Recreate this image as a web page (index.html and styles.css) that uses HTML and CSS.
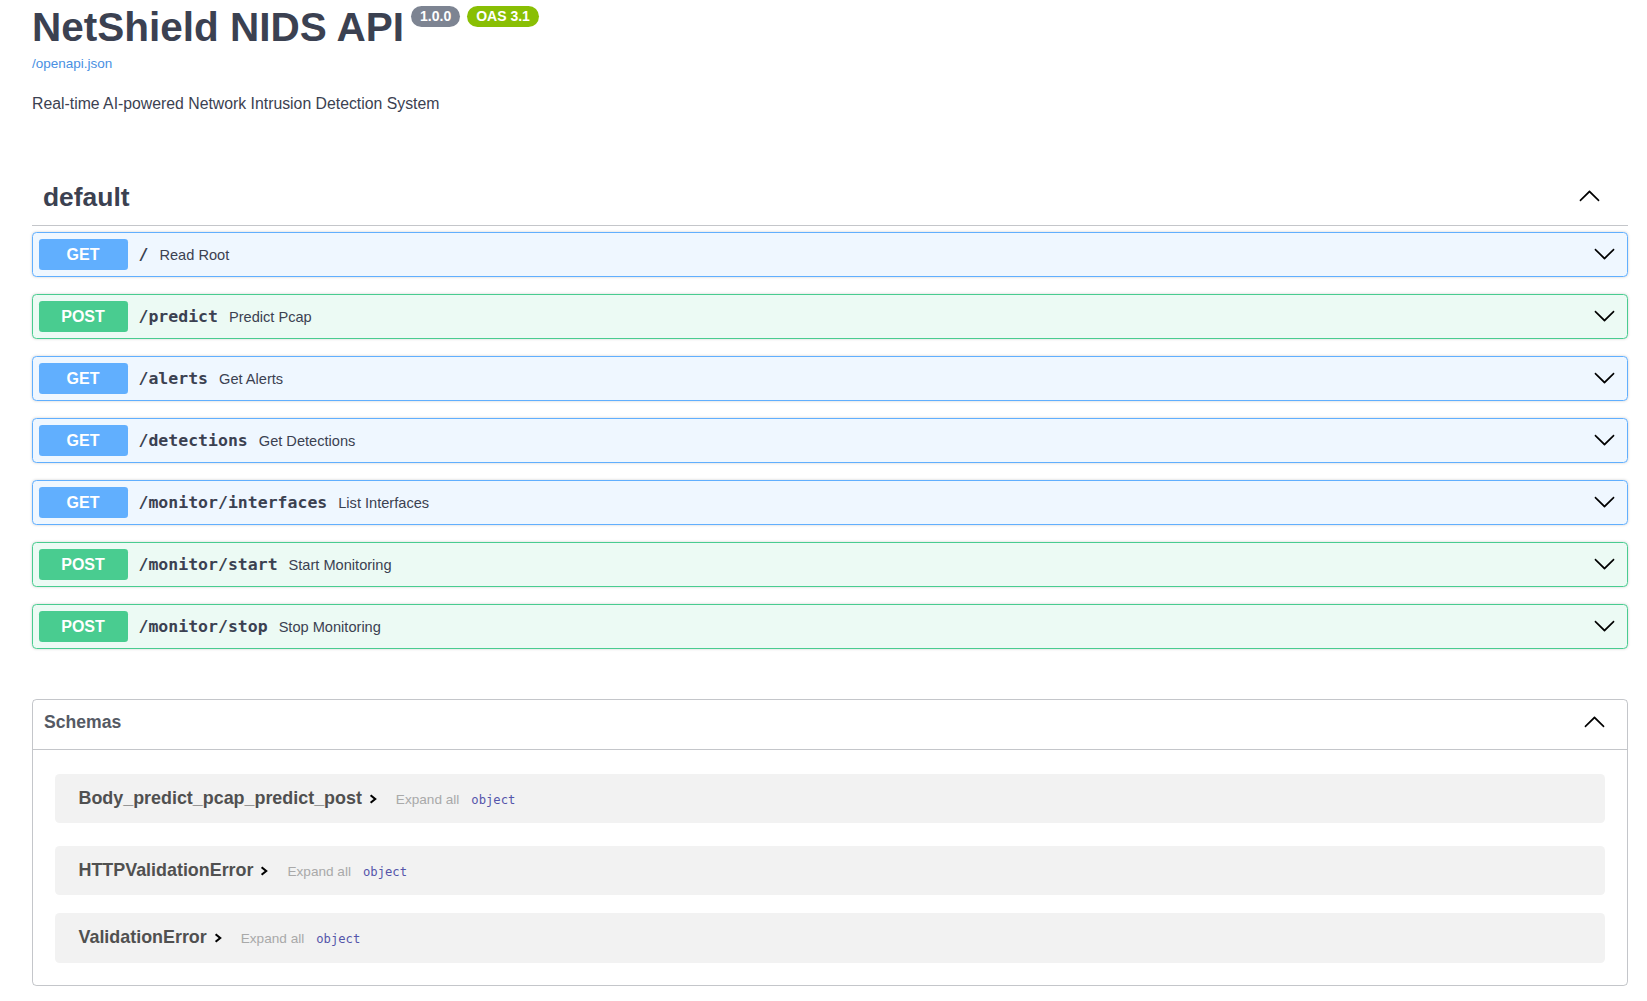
FILE: index.html
```html
<!DOCTYPE html>
<html>
<head>
  <meta charset="UTF-8">
  <title>NetShield NIDS API - Swagger UI</title>
  <link rel="stylesheet" href="styles.css">
</head>
<body>
  <svg class="defs" width="0" height="0">
    <symbol id="arrow-up" viewBox="0 0 20 20">
      <path d="M17.418 13.891c.272.268.709.268.979 0s.271-.701 0-.969l-7.908-7.83c-.27-.268-.707-.268-.979 0l-7.908 7.83c-.27.268-.27.701 0 .969.271.268.709.268.979 0L10 6.75l7.418 7.141z"/>
    </symbol>
    <symbol id="arrow-down" viewBox="0 0 20 20">
      <path d="M17.418 6.109c.272-.268.709-.268.979 0s.271.701 0 .969l-7.908 7.83c-.27.268-.707.268-.979 0l-7.908-7.83c-.27-.268-.27-.701 0-.969.271-.268.709-.268.979 0L10 13.25l7.418-7.141z"/>
    </symbol>
    <symbol id="chevron-right" viewBox="0 0 8 10">
      <path d="M1.6 1.2 L6.2 5 L1.6 8.8" fill="none" stroke="#000" stroke-width="2.1"/>
    </symbol>
  </svg>

  <div class="wrapper">
    <div class="info">
      <h2 class="title">
        <span>NetShield NIDS API</span>
        <small class="badge version">1.0.0</small>
        <small class="badge oas">OAS 3.1</small>
      </h2>
      <a class="spec-link" href="#">/openapi.json</a>
      <p class="description">Real-time AI-powered Network Intrusion Detection System</p>
    </div>

    <div class="tag-section">
      <div class="tag-head">
        <h3>default</h3>
        <svg class="arrow"><use href="#arrow-up"/></svg>
      </div>

      <div class="ops">
        <div class="opblock get">
          <span class="method">GET</span>
          <span class="path">/</span>
          <span class="summary">Read Root</span>
          <svg class="arrow"><use href="#arrow-down"/></svg>
        </div>
        <div class="opblock post">
          <span class="method">POST</span>
          <span class="path">/predict</span>
          <span class="summary">Predict Pcap</span>
          <svg class="arrow"><use href="#arrow-down"/></svg>
        </div>
        <div class="opblock get">
          <span class="method">GET</span>
          <span class="path">/alerts</span>
          <span class="summary">Get Alerts</span>
          <svg class="arrow"><use href="#arrow-down"/></svg>
        </div>
        <div class="opblock get">
          <span class="method">GET</span>
          <span class="path">/detections</span>
          <span class="summary">Get Detections</span>
          <svg class="arrow"><use href="#arrow-down"/></svg>
        </div>
        <div class="opblock get">
          <span class="method">GET</span>
          <span class="path">/monitor/interfaces</span>
          <span class="summary">List Interfaces</span>
          <svg class="arrow"><use href="#arrow-down"/></svg>
        </div>
        <div class="opblock post">
          <span class="method">POST</span>
          <span class="path">/monitor/start</span>
          <span class="summary">Start Monitoring</span>
          <svg class="arrow"><use href="#arrow-down"/></svg>
        </div>
        <div class="opblock post">
          <span class="method">POST</span>
          <span class="path">/monitor/stop</span>
          <span class="summary">Stop Monitoring</span>
          <svg class="arrow"><use href="#arrow-down"/></svg>
        </div>
      </div>
    </div>

    <section class="models">
      <div class="models-head">
        <h4>Schemas</h4>
        <svg class="arrow"><use href="#arrow-up"/></svg>
      </div>
      <div class="model-list">
        <div class="model-box">
          <span class="model-title">Body_predict_pcap_predict_post</span>
          <svg class="toggle"><use href="#chevron-right"/></svg>
          <span class="expand">Expand all</span>
          <span class="prop-type">object</span>
        </div>
        <div class="model-box">
          <span class="model-title">HTTPValidationError</span>
          <svg class="toggle"><use href="#chevron-right"/></svg>
          <span class="expand">Expand all</span>
          <span class="prop-type">object</span>
        </div>
        <div class="model-box">
          <span class="model-title">ValidationError</span>
          <svg class="toggle"><use href="#chevron-right"/></svg>
          <span class="expand">Expand all</span>
          <span class="prop-type">object</span>
        </div>
      </div>
    </section>
  </div>
</body>
</html>
```

FILE: styles.css
```css
body {
  margin: 0;
  font-family: "Liberation Sans", Arial, sans-serif;
  color: #3b4151;
  background: #fff;
}
.defs {
  display: block;
  width: 0;
  height: 0;
}
.wrapper {
  padding: 3px 19px 8px 32px;
}

/* info block */
.title {
  display: flex;
  align-items: flex-start;
  gap: 7px;
  margin: 0;
  font-size: 40.5px;
  line-height: 48px;
  font-weight: bold;
  color: #3b4151;
}
.badge {
  margin-top: 3px;
  padding: 0 9px;
  height: 21px;
  line-height: 21px;
  border-radius: 57px;
  font-size: 14px;
  color: #fff;
}
.version { background: #7d8492; }
.oas { background: #89bf04; }
.spec-link {
  display: block;
  margin-top: 4.4px;
  font-size: 13.5px;
  line-height: 18px;
  color: #4990e2;
  text-decoration: none;
}
.description {
  margin: 21px 0 0;
  font-size: 15.8px;
  line-height: 20px;
}

/* operations */
.tag-section {
  margin-top: 56.5px;
}
.tag-head {
  display: flex;
  align-items: center;
  justify-content: space-between;
  padding: 10px 27px 12.5px 11px;
  border-bottom: 1px solid rgba(59,65,81,.3);
}
.tag-head h3 {
  margin: 0;
  font-size: 26.4px;
  line-height: 32px;
}
.arrow {
  width: 23px;
  height: 23px;
  fill: #000;
}
.ops {
  display: flex;
  flex-direction: column;
  gap: 17px;
  margin-top: 6px;
}
.opblock {
  display: flex;
  align-items: center;
  padding: 6px 11px 6px 5.5px;
  border: 1px solid;
  border-radius: 4.4px;
  box-shadow: 0 0 3px rgba(0,0,0,.19);
}
.opblock.get {
  border-color: #61affe;
  background: rgba(97,175,254,.1);
}
.opblock.post {
  border-color: #49cc90;
  background: rgba(73,204,144,.1);
}
.method {
  width: 89px;
  height: 31px;
  line-height: 31px;
  border-radius: 3.3px;
  text-align: center;
  font-size: 16px;
  font-weight: bold;
  color: #fff;
}
.get .method { background: #61affe; }
.post .method { background: #49cc90; }
.path {
  margin: 0 11px;
  font-family: "DejaVu Sans Mono", monospace;
  font-size: 16.5px;
  font-weight: bold;
}
.summary {
  font-size: 14.6px;
}
.opblock .arrow {
  margin-left: auto;
  margin-bottom: 3px;
}

/* schemas */
.models {
  margin-top: 49.5px;
  border: 1px solid rgba(59,65,81,.3);
  border-radius: 4.4px;
}
.models-head {
  display: flex;
  align-items: center;
  justify-content: space-between;
  padding: 8.5px 21px 13px 11px;
  border-bottom: 1px solid rgba(59,65,81,.3);
}
.models-head h4 {
  margin: 0;
  font-size: 17.6px;
  line-height: 28px;
  color: #555a64;
}
.model-list {
  padding: 23.3px 22px 22px;
}
.model-box {
  display: flex;
  align-items: baseline;
  box-sizing: border-box;
  height: 49.5px;
  padding: 14px 0 0 23.5px;
  margin-bottom: 18px;
  background: rgba(0,0,0,.05);
  border-radius: 4.4px;
}
.model-box:first-child { margin-bottom: 22.5px; }
.model-box:last-child { margin-bottom: 0; }
.model-title {
  font-size: 17.9px;
  font-weight: bold;
  color: #505050;
}
.toggle {
  width: 8px;
  height: 10px;
  margin: 0 19px -3px 7px;
}
.expand {
  font-size: 13.6px;
  color: #a9a9a9;
}
.prop-type {
  margin-left: 12px;
  font-family: "DejaVu Sans Mono", monospace;
  font-size: 12.2px;
  color: #55a;
}
```
